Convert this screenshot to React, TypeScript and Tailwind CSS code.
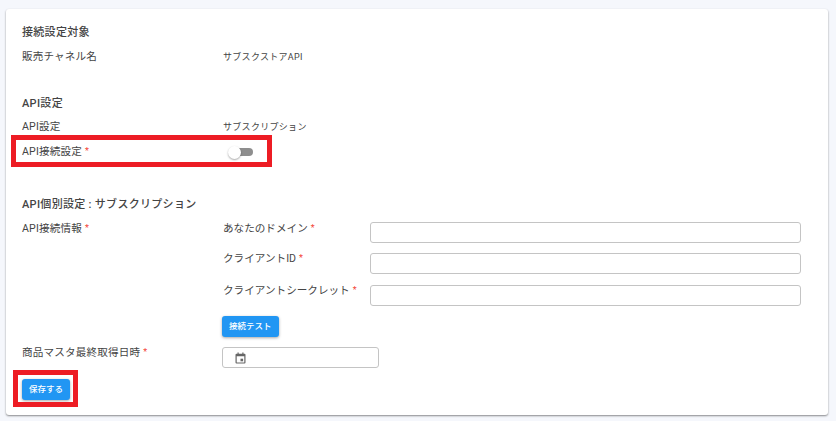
const font = "font-['Roboto','Noto_Sans_CJK_JP',sans-serif]";

function Req() {
  return <span className="relative top-[-1px] ml-[3px] text-[9px] leading-none text-[#f44336]">*</span>;
}

function Label({ children, req }: { children: React.ReactNode; req?: boolean }) {
  return (
    <div className="w-[200px] shrink-0 whitespace-nowrap text-[10.6px] leading-[16px] tracking-[0.15px] text-[#444]">
      {children}
      {req && <Req />}
    </div>
  );
}

function Title({ children }: { children: React.ReactNode }) {
  return (
    <div className="h-[16px] whitespace-pre text-[11px] font-medium leading-[16px] tracking-[0.3px] text-[#444]">
      {children}
    </div>
  );
}

function Field({ label, h, mt }: { label: string; h: string; mt: string }) {
  return (
    <div className={`flex ${h}`}>
      <div className="w-[148px] shrink-0 whitespace-nowrap pl-[1px] text-[10.6px] leading-[16px] text-[#444]">
        {label}
        <Req />
      </div>
      <div className={`${mt} h-[21px] w-[431px] rounded-[3px] border border-[#c4c4c4] bg-white`} />
    </div>
  );
}

function Btn({ children }: { children: React.ReactNode }) {
  return (
    <div className="flex">
      <button className="h-[21px] rounded-[3px] bg-[#2196f3] px-[7px] text-[8.5px] font-medium leading-[21px] text-white shadow-[0_1px_3px_rgba(0,0,0,0.35)]">
        {children}
      </button>
    </div>
  );
}

export default function App() {
  return (
    <div className={`${font} relative h-[421px] w-[836px] overflow-hidden bg-[#f5f7fc] px-[6px] pt-[9px]`}>
      <div className="h-[406px] w-[822px] rounded-[3px] bg-white pl-[16px] pt-[16px] shadow-[0_1px_2px_rgba(0,0,0,0.45)]">
        <Title>接続設定対象</Title>
        <div className="mt-[8px] flex">
          <Label>販売チャネル名</Label>
          <div className="pl-[1px] text-[9px] leading-[16px] tracking-[0.3px] text-[#444]">サブスクストアAPI</div>
        </div>
        <div className="mt-[31px]">
          <Title>API設定</Title>
        </div>
        <div className="mt-[7px] flex">
          <Label>API設定</Label>
          <div className="pl-[1px] text-[9px] leading-[16px] tracking-[0.3px] text-[#444]">サブスクリプション</div>
        </div>
        <div className="mt-[9px] flex h-[16px]">
          <Label req>API接続設定</Label>
          <div className="relative ml-[11px] mt-[4px] h-[8px] w-[20px] rounded-r-full bg-[#8e8e8e]">
            <div className="absolute left-[-5px] top-[-2.500px] h-[13px] w-[13px] rounded-full bg-white shadow-[0_1px_2px_rgba(0,0,0,0.35)]" />
          </div>
        </div>
        <div className="mt-[37px]">
          <Title>API個別設定 : サブスクリプション</Title>
        </div>
        <div className="mt-[8px] flex">
          <Label req>API接続情報</Label>
          <div className="flex flex-col">
            <Field label="あなたのドメイン" h="h-[30px]" mt="mt-[1px]" />
            <Field label="クライアントID" h="h-[32px]" mt="mt-[2px]" />
            <Field label="クライアントシークレット" h="h-[32px]" mt="mt-[2px]" />
            <div className="mt-[1px]">
              <Btn>接続テスト</Btn>
            </div>
          </div>
        </div>
        <div className="mt-[8px] flex">
          <Label req>商品マスタ最終取得日時</Label>
          <div className="mt-[2px] flex h-[21px] w-[157px] items-center rounded-[3px] border border-[#c4c4c4] bg-white pl-[12px]">
            <svg width="11" height="12" viewBox="0 0 11 12" fill="none">
              <path
                d="M2.500 0.500v1.200h-1a1 1 0 0 0-1 1v7.800a1 1 0 0 0 1 1h8a1 1 0 0 0 1-1V2.700a1 1 0 0 0-1-1h-1V0.500H7.300v1.200H3.700V0.500H2.500ZM1.700 4.300h7.600v6.300H1.700V4.300Z"
                fill="#666"
              />
              <rect x="5.500" y="6.700" width="2.600" height="2.600" fill="#666" />
            </svg>
          </div>
        </div>
        <div className="mt-[11px]">
          <Btn>保存する</Btn>
        </div>
      </div>
      <div className="pointer-events-none absolute left-[11px] top-[135px] h-[32px] w-[261px] border-[5px] border-[#ed1c24]" />
      <div className="pointer-events-none absolute left-[13px] top-[370px] h-[37px] w-[65px] border-[5px] border-[#ed1c24]" />
    </div>
  );
}
